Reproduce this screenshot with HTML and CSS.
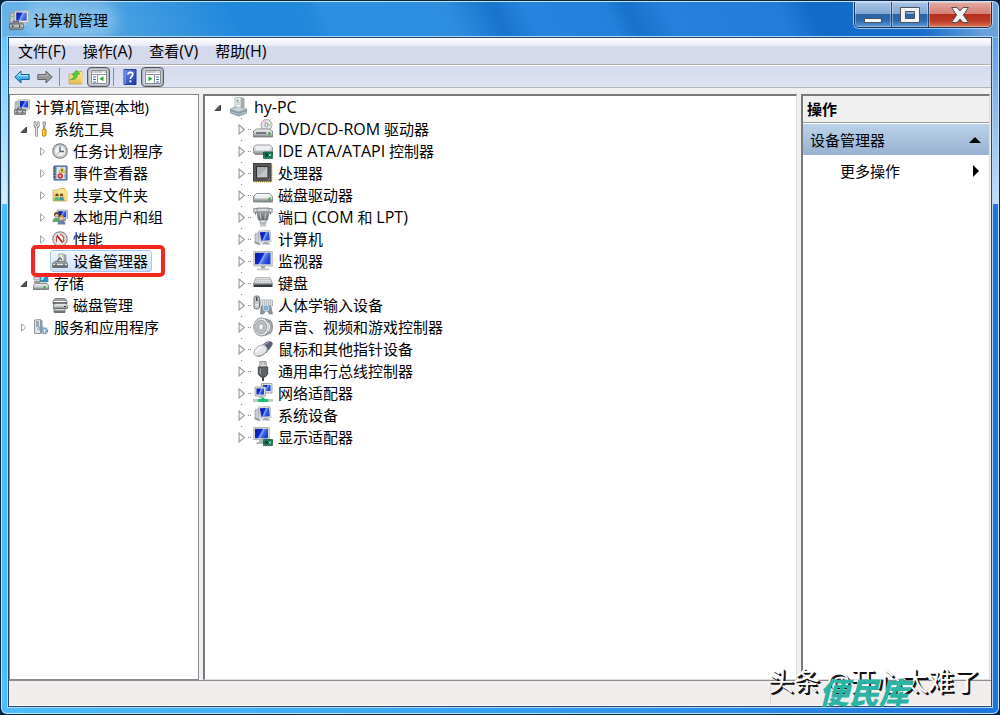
FILE: index.html
```html
<!doctype html>
<html lang="zh-CN">
<head>
<meta charset="UTF-8">
<title>计算机管理</title>
<link rel="stylesheet" href="styles.css">
</head>
<body>
<svg class="sprite" aria-hidden="true">
	<defs>
		<linearGradient id="gBlue" x1="0" y1="0" x2="1" y2=".4"><stop offset="0" stop-color="#0a1a9c"/><stop offset=".5" stop-color="#1228d4"/><stop offset=".58" stop-color="#86aaf6"/><stop offset=".75" stop-color="#3c66e4"/><stop offset="1" stop-color="#1c3fd0"/></linearGradient>
		<linearGradient id="gMetal" x1="0" y1="0" x2="0" y2="1"><stop offset="0" stop-color="#f4f5f5"/><stop offset=".6" stop-color="#c3c6c8"/><stop offset="1" stop-color="#777b7e"/></linearGradient>
		<linearGradient id="gDark" x1="0" y1="0" x2="0" y2="1"><stop offset="0" stop-color="#b5babd"/><stop offset="1" stop-color="#5b6165"/></linearGradient>
		<linearGradient id="gFolder" x1="0" y1="0" x2="0" y2="1"><stop offset="0" stop-color="#fdf0a8"/><stop offset="1" stop-color="#e5b94f"/></linearGradient>
		<linearGradient id="gArrow" x1="0" y1="0" x2="0" y2="1"><stop offset="0" stop-color="#8fdcff"/><stop offset="1" stop-color="#0d8be0"/></linearGradient>
		<linearGradient id="gHelp" x1="0" y1="0" x2="1" y2="1"><stop offset="0" stop-color="#6c8fe8"/><stop offset="1" stop-color="#1c34a8"/></linearGradient>
	</defs>
	<symbol id="open" viewBox="0 0 9 9"><path d="M7.500 2v5.500H2z" fill="#555" stroke="#2b2b2b" stroke-width=".8"/></symbol>
	<symbol id="closed" viewBox="0 0 9 9"><path d="M2.500.8v7.400L6.800 4.500z" fill="#fff" stroke="#999" stroke-width=".9"/></symbol>
	<symbol id="console" viewBox="0 0 16 16">
		<path d="M1 3l3-1v9H1z" fill="#c9cdd0" stroke="#888" stroke-width=".6"/>
		<path d="M4.500.800h11v9.200h-11z" fill="#e4e4dc" stroke="#a3a69f" stroke-width=".7"/><path d="M5.800 2h8.400v6.500H5.800z" fill="url(#gBlue)"/>
		<path d="M8 10h5l1 2H8z" fill="#bbb"/>
		<path d="M3.500 10.500v-1.500h4v1.500" fill="none" stroke="#666"/>
		<rect x=".5" y="10.500" width="11" height="5" rx=".7" fill="#8a9095" stroke="#5b6267" stroke-width=".7"/>
		<path d="M1 12.700h10" stroke="#ddd"/><path d="M3 12v2M8.500 12v2" stroke="#444"/><path d="M2 5h1" stroke="#2c2"/>
	</symbol>
	<symbol id="tools" viewBox="0 0 16 16">
		<path d="M2 1.500v3l1.600 1.300L5.200 4.500v-3M2.300 5.500h2.600M3.600 6v8.500" fill="none" stroke="#777" stroke-width="2.600" stroke-linecap="round"/>
		<path d="M2 1.500v3l1.600 1.300L5.200 4.500v-3M3.600 6v8.500" fill="none" stroke="#e2e4e6" stroke-width="1.300" stroke-linecap="round"/>
		<path d="M10 1h2.500v2l-.6 1.500v4h-1.400v-4L10 3z" fill="#ddd" stroke="#666" stroke-width=".7"/>
		<rect x="9.300" y="8" width="3.800" height="7.300" rx="1.500" fill="#f3b51b" stroke="#a56d00" stroke-width=".7"/><path d="M10.700 9v5" stroke="#ffe58a"/>
	</symbol>
	<symbol id="clock" viewBox="0 0 16 16">
		<circle cx="8" cy="8" r="7.200" fill="#e2e2de" stroke="#7f8082" stroke-width="1.200"/><circle cx="8" cy="8" r="5.600" fill="#edf2f9" stroke="#b2aaa0" stroke-width=".7"/>
		<path d="M8 3.500V8.500h4" fill="none" stroke="#58616c" stroke-width="1.300"/><path d="M5 11l2.500-2" stroke="#d39a35"/>
	</symbol>
	<symbol id="events" viewBox="0 0 16 16">
		<path d="M2 1h13v14H2z" fill="#7391c0" stroke="#44608f"/><path d="M4.500 2h9v12h-9z" fill="#dce6f3"/>
		<path d="M1 3h3M1 6h3M1 9h3M1 12h3" stroke="#555"/><path d="M10 2.200l3.200 5.300H6.800z" fill="#ffd22b" stroke="#b88a20" stroke-width=".5"/><path d="M10 4v2.500" stroke="#222"/>
		<circle cx="8.300" cy="11" r="2.700" fill="#d63030"/><path d="M7.300 10l2 2m0-2l-2 2" stroke="#fff" stroke-width=".8"/><path d="M12 10h2M12 12h2" stroke="#788faa"/>
	</symbol>
	<symbol id="share" viewBox="0 0 16 16">
		<path d="M1 3h5l1.500-1.500H13V4h2v10H1z" fill="url(#gFolder)" stroke="#c9a04a" stroke-width=".7"/><path d="M12.500 2v11l2.500 1V3z" fill="#f9e28b"/>
		<circle cx="5" cy="8" r="1.600" fill="#5a3b1c"/><circle cx="9.500" cy="8" r="1.600" fill="#6a4a25"/><path d="M2.300 13.500c0-5 5-5 5.200 0z" fill="#4fbf78"/><path d="M7 13.500c0-5 5-5 5.200 0z" fill="#4a8fb5"/><path d="M4 9.500h2M8.500 9.500h2" stroke="#f0c79b"/>
	</symbol>
	<symbol id="users" viewBox="0 0 16 16">
		<path d="M5 1h10.500v8.500H5z" fill="#ddd" stroke="#999" stroke-width=".7"/><path d="M6.200 2.200h8v6h-8z" fill="url(#gBlue)"/><path d="M10 10h4v2h-4z" fill="#999"/>
		<circle cx="4.500" cy="5.500" r="2.500" fill="#6a4a2c"/><circle cx="4.800" cy="6.500" r="1.600" fill="#f0c090"/><path d="M.5 13c0-6 8-6 8 0z" fill="#61a66a"/>
		<circle cx="9.500" cy="8.500" r="2.500" fill="#c38b31"/><circle cx="9.500" cy="9.300" r="1.600" fill="#f4cba4"/><path d="M5.500 15.500c0-6 8-6 8 0z" fill="#6980ae"/>
	</symbol>
	<symbol id="perf" viewBox="0 0 16 16">
		<circle cx="8" cy="8" r="7.200" fill="#f5f5f5" stroke="#8a8a8a" stroke-width="1.200"/><circle cx="8" cy="8" r="5.300" fill="#fff" stroke="#a8a8a8" stroke-width=".6"/>
		<path d="M4.500 11V6.500L6 4.500M8 3.500l2 .7 1.700 2.300V11" fill="none" stroke="#c44" stroke-width="1.200"/><path d="M5 4.500l5.500 7" stroke="#c5161e" stroke-width="1.800"/>
	</symbol>
	<symbol id="devmgr" viewBox="0 0 16 16">
		<path d="M7 1h5v8H7z" fill="#eef1f1" stroke="#8b9598" stroke-width=".8"/><path d="M12 1l2.500 1v7H12z" fill="#9ca4a7"/><path d="M5 8l3-3 2 2" fill="none" stroke="#526068" stroke-width="1.300"/><path d="M10 3h1" stroke="#2a3"/>
		<path d="M2.500 8.500h11l2 2v4h-15v-4z" fill="url(#gDark)" stroke="#5e666c" stroke-width=".8"/><path d="M1 11.500h14" stroke="#e0e5e7"/><path d="M4 10.500v2M12 10.500v2" stroke="#333"/>
	</symbol>
	<symbol id="storage" viewBox="0 0 16 16">
		<path d="M1 2h7v3H1z" fill="#dce1e3" stroke="#777" stroke-width=".7"/><path d="M7 1h8v6H7z" fill="#238fc3" stroke="#78868d" stroke-width=".7"/><path d="M8 2h4l-2 3H8z" fill="#93e0f3"/>
		<path d="M1 6h6v2H1z" fill="#999"/><path d="M2 8.500h12l1.500 2v4H.5v-4z" fill="url(#gMetal)" stroke="#666" stroke-width=".7"/><path d="M11.500 11v2.500" stroke="#21a326" stroke-width="1.500"/>
	</symbol>
	<symbol id="diskmgr" viewBox="0 0 16 16">
		<path d="M3 1.500h10l2 2.500v3H1V4z" fill="url(#gDark)" stroke="#555" stroke-width=".7"/><path d="M1.500 4.500h13" stroke="#fff"/>
		<path d="M3 6.500h11l1.500 2v3h-14v-3z" fill="url(#gMetal)" stroke="#666" stroke-width=".7"/><path d="M2 11.500h11v4H2z" fill="url(#gDark)" stroke="#555" stroke-width=".7"/><path d="M2.500 12.700h10" stroke="#e7e7e7"/><path d="M12 9.500h2" stroke="#333"/>
	</symbol>
	<symbol id="services" viewBox="0 0 16 16">
		<path d="M1.500 1l6-.5v14h-6z" fill="#e0e5e8" stroke="#778087" stroke-width=".8"/><path d="M7.500.5l2 1v13h-2z" fill="#8f989d"/><path d="M3 3h3M3 5h3M3 7h3" stroke="#667"/><path d="M4 10h1" stroke="#2b2"/>
		<circle cx="8" cy="9" r="2" fill="none" stroke="#79a0c5" stroke-width="1.500" stroke-dasharray="1.300 .6"/><circle cx="11.500" cy="11.800" r="2.700" fill="#e7f1fa" stroke="#6690b8" stroke-width="1.900" stroke-dasharray="1.500 .7"/><circle cx="11.500" cy="11.800" r="1.500" fill="#fff" stroke="#7da4c9"/>
	</symbol>
	<symbol id="pc" viewBox="0 0 20 20">
		<path d="M6 1l6-1v13l-6-1z" fill="#edf0ee" stroke="#9ca4a3" stroke-width=".7"/><path d="M12 0l3.500 1.500v11L12 13z" fill="#a2aaaa"/><path d="M7.300 5h3.500M7.300 7h3.500" stroke="#b5beba"/><circle cx="8.500" cy="3.500" r=".9" fill="#34b545"/>
		<path d="M1.500 12l5-2 11 2v4l-8 3-8-3z" fill="#8ea0aa" stroke="#73808a" stroke-width=".7"/><path d="M1.500 12l8 2.500 8-2.500-8-2z" fill="#c8d3d8"/><path d="M1.500 15l8 2.500 8-2.500" fill="none" stroke="#b9c6cc"/>
	</symbol>
	<symbol id="drive" viewBox="0 0 20 20">
		<path d="M3.500 8.500h13l3 3v5.500H.5v-5.500z" fill="url(#gMetal)" stroke="#777b7d" stroke-width=".8"/><path d="M3.500 9h13l2 2.500h-17z" fill="#f6f7f7"/><path d="M2 12.500h14" stroke="#fafafa"/><rect x="15.500" y="12.500" width="1.800" height="3.300" fill="#26b331"/>
	</symbol>
	<symbol id="dvd" viewBox="0 0 20 20">
		<circle cx="13.500" cy="6" r="5.500" fill="#e2e5e9" stroke="#8c9299" stroke-width=".8"/><path d="M13.500 6L9.500 2.200A5.500 5.500 0 0 1 13 .700z" fill="#f0bddd"/><path d="M13.500 6l5-2a5.500 5.500 0 0 1 .3 3z" fill="#abe0ab"/><circle cx="13.500" cy="6" r="1.600" fill="#fff" stroke="#888"/>
		<path d="M3.500 10h13l3 2v6H.5v-6z" fill="url(#gMetal)" stroke="#71777a" stroke-width=".8"/><path d="M3 14h10" stroke="#41484c" stroke-width="1.300"/><rect x="15.500" y="13" width="1.800" height="3" fill="#26b331"/>
	</symbol>
	<symbol id="ide" viewBox="0 0 20 20">
		<path d="M3 4h14l2.500 2.500v6L17 13.500H2.500L.5 12V6.500z" fill="url(#gMetal)" stroke="#81868a" stroke-width=".8"/><path d="M3 5.500h14v4H3z" fill="#eceeef"/>
		<path d="M10.500 11h9v6.500h-9z" fill="#1c7a5c" stroke="#0d4b36" stroke-width=".7"/><path d="M12 12.500h3v3h-3z" fill="#253238"/><path d="M16 13h2v2h-2z" fill="#6be09a"/><path d="M12 18h6" stroke="#d7aa34" stroke-dasharray="1 1"/>
	</symbol>
	<symbol id="cpu" viewBox="0 0 20 20">
		<path d="M1 18.800h18M18.800 2v17" stroke="#d5a536" stroke-width="1.300" stroke-dasharray="1 1"/><rect x=".5" y=".5" width="17.500" height="17.500" fill="#56585a" stroke="#3d3f41"/><rect x="3.500" y="3.500" width="11.500" height="11.500" fill="#c3c5c6" stroke="#2c2e2f"/><path d="M4 14.500V4h10.500z" fill="#aaadaf"/><path d="M15 16.500h1.500V15z" fill="#e8b52f"/>
	</symbol>
	<symbol id="port" viewBox="0 0 20 20">
		<path d="M.8 1.500h18.400v4H.8z" fill="#d6dadb" stroke="#7c8386" stroke-width=".8"/><path d="M4 1h12v5l-1.500 7h-9L4 6z" fill="url(#gDark)" stroke="#7c8286" stroke-width=".8"/><path d="M4.500 3h11" stroke="#f1f3f4" stroke-width="1.300"/><path d="M7 6l1 6M12.500 6l-.5 6" stroke="#cbd0d3"/><path d="M2.500 5.500v2M17.500 5.500v2" stroke="#666"/><path d="M7 13h6v3H7z" fill="#dde0e2" stroke="#777" stroke-width=".6"/><path d="M8 16v3.500M10 16v3.500M12 16v3.500" stroke="#858a8f"/>
	</symbol>
	<symbol id="computer" viewBox="0 0 20 20">
		<path d="M2 5l4-1.500v11L2 13z" fill="#c8cccf" stroke="#999" stroke-width=".7"/><path d="M5.500 2L17 1.500l1 11-10 1z" fill="#e3e4df" stroke="#b4b7b3" stroke-width=".8"/><path d="M6.800 3.200l9.200-.5.800 8.500-8.300.9z" fill="url(#gBlue)"/><path d="M11 13h4l2.500 2.500H9z" fill="#a7abad"/><path d="M2 13l6 2-1.500 1L1 14z" fill="#858b8e"/>
	</symbol>
	<symbol id="monitor" viewBox="0 0 20 20">
		<path d="M.7.500h18.600v14.500H.7z" fill="#dcddd8" stroke="#a9ada9" stroke-width=".8"/><path d="M2 1.800h15.500v11.500H2z" fill="url(#gBlue)"/><path d="M8 15h4v2.500H8z" fill="#a0a2a0"/><path d="M4.500 17.500h11l1 1.700h-13z" fill="#c3c5c3"/>
	</symbol>
	<symbol id="keyboard" viewBox="0 0 20 20">
		<path d="M3 5h14l2.500 5v4H.5v-4z" fill="#35383c"/><path d="M3 4.500h14l2.200 6H.8z" fill="#dfe2e5" stroke="#9ba0a5" stroke-width=".7"/><path d="M3.500 6.500h13M3 8.500h14" stroke="#a4aab0" stroke-dasharray="1 1"/><path d="M.5 11.200h19" stroke="#8b9095"/>
	</symbol>
	<symbol id="hid" viewBox="0 0 20 20">
		<path d="M6 5h13.500v6H6z" fill="#e2e4e6" stroke="#999" stroke-width=".7"/><path d="M7 7h12M7 9h12" stroke="#8d9297" stroke-dasharray="1 1"/><rect x="1" y="1" width="5.500" height="13" rx="2" fill="#c5c9cc" stroke="#6f767c"/><path d="M3 2h1.500v4H3z" fill="#42484d"/><path d="M2 10h3.500" stroke="#fff"/>
		<path d="M8 12c2-2 9-2 10 0l1.500 7h-3l-2-3h-2l-2 3h-3z" fill="#8a949e" stroke="#76818b" stroke-width=".7"/><circle cx="13" cy="13" r="3" fill="#7eafd4" stroke="#c8d8e7"/>
	</symbol>
	<symbol id="sound" viewBox="0 0 20 20">
		<path d="M12 1.500l6 2.500c2 4 2 8 0 12l-6 2.500z" fill="#a1a7ab" stroke="#777" stroke-width=".7"/><ellipse cx="8.500" cy="10" rx="7.800" ry="9" fill="#e4e6e8" stroke="#8f9599"/><ellipse cx="8" cy="10" rx="5.800" ry="6.800" fill="#b9bec1" stroke="#8e959a" stroke-width=".7"/><ellipse cx="8" cy="10" rx="2.500" ry="3.300" fill="#eef0f2" stroke="#a2a8ae"/><path d="M15 6c2 2 2 6 0 8" fill="none" stroke="#f8f8f8"/>
	</symbol>
	<symbol id="mouse" viewBox="0 0 20 20">
		<path d="M8.500 7L12 4c3-2 7-2 7.500.5C19 8 15 11 13 14z" fill="#555f6e" stroke="#6b7482" stroke-width=".7"/><path d="M11 5.500L16 3.200" stroke="#aab2bd"/><path d="M.8 14c0-4 6-9 9.700-8 3.500 1 4.500 4.500 3 6.500-2 3-5 5-8 5-2.700 0-4.700-1.500-4.700-3.500z" fill="#e2e4e6" stroke="#9aa0a6" stroke-width=".8"/><path d="M3 13c2-3.500 4-4.500 6-5" fill="none" stroke="#fff" stroke-width="1.800"/><path d="M4 17c4 .5 8-2 10-5.500" fill="none" stroke="#8d949b"/>
	</symbol>
	<symbol id="usb" viewBox="0 0 20 20">
		<path d="M6.800.5h6.400v6H6.800z" fill="#d4d8da" stroke="#999"/><path d="M8.300 2.500h1M11 2.500h1" stroke="#888" stroke-width="1.300"/><path d="M5.300 6h9.400v7l-2.500 3H7.800l-2.500-3z" fill="#5d6166" stroke="#44474b"/><path d="M7.300 7.500V13" stroke="#a3a8ad"/><path d="M10 16v4" stroke="#444" stroke-width="2"/>
	</symbol>
	<symbol id="network" viewBox="0 0 20 20">
		<path d="M8.500.500h10.500v9.500H8.500z" fill="#dddfe0" stroke="#aaa"/><path d="M10 2h7.500v6H10z" fill="url(#gBlue)"/><path d="M2 4h10.500v9H2z" fill="#dddfe0" stroke="#aaa"/><path d="M3.500 5.500h7.500v6H3.500z" fill="url(#gBlue)"/><path d="M6 13h4v2H6z" fill="#bbb"/><path d="M0 17.500h20" stroke="#b9cfc2" stroke-width="3"/><path d="M5 17.500h10M10 17.500v-3" stroke="#18c070" stroke-width="3"/>
	</symbol>
	<symbol id="display" viewBox="0 0 20 20">
		<path d="M.7.500h15.600v12H.7z" fill="#dcddd8" stroke="#a9ada9" stroke-width=".8"/><path d="M2 1.800h13v9.500H2z" fill="url(#gBlue)"/><path d="M6 13h4v2H6zM3.500 15h9v2h-9z" fill="#b6b8b8"/><path d="M10.500 12.500h9v6h-9z" fill="#1c7a5c" stroke="#0d4b36" stroke-width=".7"/><path d="M12 14h3v3h-3z" fill="#29353b"/><path d="M16 14.500h2v2h-2z" fill="#6be09a"/><path d="M12 19h6" stroke="#d7aa34" stroke-dasharray="1 1"/>
	</symbol>
	<symbol id="back" viewBox="0 0 16 16"><path d="M.8 8L7 2v3.500h8.200v5H7V14z" fill="url(#gArrow)" stroke="#1b6093"/><path d="M3 7.500l3-3V6.600h8" fill="none" stroke="#c9efff" stroke-width=".8"/></symbol>
	<symbol id="forward" viewBox="0 0 16 16"><path d="M15.200 8L9 2v3.500H.8v5H9V14z" fill="#979797" stroke="#656565"/><path d="M1.800 6.600H10V4.500" fill="none" stroke="#c5c5c5" stroke-width=".8"/></symbol>
	<symbol id="up" viewBox="0 0 16 16"><path d="M1 5h6l1.500-2.500H14V15H1z" fill="url(#gFolder)" stroke="#c9a653" stroke-width=".8"/><path d="M13 3l1.700 1v9L13 15z" fill="#f9dc7b"/><path d="M2.500 10.500c2.500-.5 3.300-2 3.500-5L4 6l4.500-4.800L12 5l-2.500.3C9.500 9 6.500 11.500 2.500 10.500z" fill="#54ce38" stroke="#3a9a2a" stroke-width=".6"/></symbol>
	<symbol id="showtree" viewBox="0 0 16 16"><path d="M.5 1.500h15v13H.5z" fill="#fff" stroke="#8a8f94"/><path d="M1 3h14M1 5.500h14" stroke="#8f9499"/><path d="M11 3h3" stroke="#fff"/><path d="M6.500 6v8" stroke="#8f9499"/><path d="M2 8h3M2 10.500h3M2 13h3" stroke="#3d6fb5"/><path d="M12.500 7.300v5L8.500 9.800z" fill="#2aa51f"/></symbol>
	<symbol id="help" viewBox="0 0 16 16"><path d="M2 .5h12v15H2z" fill="url(#gHelp)" stroke="#233b95"/><path d="M3 1v14" stroke="#8fa9f0"/><path d="M6 5.500C6 2.500 10.800 2.700 10.800 5.300 10.800 7.300 8.400 7.500 8.400 10" fill="none" stroke="#fff" stroke-width="1.700"/><circle cx="8.400" cy="12.300" r="1.100" fill="#fff"/></symbol>
	<symbol id="showpane" viewBox="0 0 16 16"><path d="M.5 1.500h15v13H.5z" fill="#fff" stroke="#8a8f94"/><path d="M1 3h14M1 5.500h14" stroke="#8f9499"/><path d="M11 3h3" stroke="#fff"/><path d="M9.500 6v8" stroke="#8f9499"/><path d="M11 8h3M11 10.500h3M11 13h3" stroke="#3d6fb5"/><path d="M3.500 7.300v5l4-2.500z" fill="#2aa51f"/></symbol>
</svg>

<div class="window">
	<header class="titlebar">
		<svg class="title-icon"><use href="#console"/></svg>
		<h1 class="title">计算机管理</h1>
		<div class="controls">
			<button class="control minimize" aria-label="最小化"><svg viewBox="0 0 20 18"><path d="M1.500 12.500h17v4h-17z" fill="#fff" stroke="#50505c"/></svg></button>
			<button class="control maximize" aria-label="最大化"><svg viewBox="0 0 20 18"><path d="M.5 1.500h19v15H.5zM5.500 5.500v7h9v-7z" fill="#f4f4f4" fill-rule="evenodd" stroke="#50505c"/></svg></button>
			<button class="control close" aria-label="关闭"><svg viewBox="0 0 20 18"><path d="M1.500 1.500h5.500L10 5l3-3.500h5.500L13.300 9l5.200 7.500H13L10 13l-3 3.500H1.500L6.700 9z" fill="#f4f4f4" stroke="#50505c"/></svg></button>
		</div>
	</header>

	<div class="client">
		<nav class="menubar">
			<button>文件<span class="latin">(F)</span></button>
			<button>操作<span class="latin">(A)</span></button>
			<button>查看<span class="latin">(V)</span></button>
			<button>帮助<span class="latin">(H)</span></button>
		</nav>
		<div class="toolbar">
			<button class="tool" aria-label="后退"><svg><use href="#back"/></svg></button>
			<button class="tool" aria-label="前进"><svg><use href="#forward"/></svg></button>
			<span class="separator"></span>
			<button class="tool" aria-label="上一级"><svg><use href="#up"/></svg></button>
			<button class="tool pressed" aria-label="显示控制台树"><svg><use href="#showtree"/></svg></button>
			<span class="separator"></span>
			<button class="tool" aria-label="帮助"><svg><use href="#help"/></svg></button>
			<button class="tool pressed" aria-label="显示操作窗格"><svg><use href="#showpane"/></svg></button>
		</div>

		<main class="panes">
			<section class="pane nav-pane">
				<ul class="tree">
					<li>
						<div class="row"><span class="node"><svg><use href="#console"/></svg>计算机管理(本地)</span></div>
						<ul>
							<li>
								<div class="row"><button class="toggle" aria-label="折叠"><svg><use href="#open"/></svg></button><span class="node"><svg><use href="#tools"/></svg>系统工具</span></div>
								<ul class="indent">
									<li class="row"><button class="toggle" aria-label="展开"><svg><use href="#closed"/></svg></button><span class="node"><svg><use href="#clock"/></svg>任务计划程序</span></li>
									<li class="row"><button class="toggle" aria-label="展开"><svg><use href="#closed"/></svg></button><span class="node"><svg><use href="#events"/></svg>事件查看器</span></li>
									<li class="row"><button class="toggle" aria-label="展开"><svg><use href="#closed"/></svg></button><span class="node"><svg><use href="#share"/></svg>共享文件夹</span></li>
									<li class="row"><button class="toggle" aria-label="展开"><svg><use href="#closed"/></svg></button><span class="node"><svg><use href="#users"/></svg>本地用户和组</span></li>
									<li class="row"><button class="toggle" aria-label="展开"><svg><use href="#closed"/></svg></button><span class="node"><svg><use href="#perf"/></svg>性能</span></li>
									<li class="row"><span class="toggle"></span><span class="node selected"><svg><use href="#devmgr"/></svg>设备管理器<span class="marker"></span></span></li>
								</ul>
							</li>
							<li>
								<div class="row"><button class="toggle" aria-label="折叠"><svg><use href="#open"/></svg></button><span class="node"><svg><use href="#storage"/></svg>存储</span></div>
								<ul class="indent">
									<li class="row"><span class="toggle"></span><span class="node"><svg><use href="#diskmgr"/></svg>磁盘管理</span></li>
								</ul>
							</li>
							<li class="row"><button class="toggle" aria-label="展开"><svg><use href="#closed"/></svg></button><span class="node"><svg><use href="#services"/></svg>服务和应用程序</span></li>
						</ul>
					</li>
				</ul>
			</section>

			<section class="pane device-pane">
				<ul class="tree devices">
					<li>
						<div class="row"><button class="toggle" aria-label="折叠"><svg><use href="#open"/></svg></button><span class="node"><svg><use href="#pc"/></svg><span class="latin">hy-PC</span></span></div>
						<ul class="indent">
							<li class="row"><button class="toggle" aria-label="展开"><svg><use href="#closed"/></svg></button><span class="node"><svg><use href="#dvd"/></svg><span><span class="latin">DVD/CD-ROM</span> 驱动器</span></span></li>
							<li class="row"><button class="toggle" aria-label="展开"><svg><use href="#closed"/></svg></button><span class="node"><svg><use href="#ide"/></svg><span><span class="latin">IDE ATA/ATAPI</span> 控制器</span></span></li>
							<li class="row"><button class="toggle" aria-label="展开"><svg><use href="#closed"/></svg></button><span class="node"><svg><use href="#cpu"/></svg>处理器</span></li>
							<li class="row"><button class="toggle" aria-label="展开"><svg><use href="#closed"/></svg></button><span class="node"><svg><use href="#drive"/></svg>磁盘驱动器</span></li>
							<li class="row"><button class="toggle" aria-label="展开"><svg><use href="#closed"/></svg></button><span class="node"><svg><use href="#port"/></svg><span>端口 <span class="latin">(COM</span> 和 <span class="latin">LPT)</span></span></span></li>
							<li class="row"><button class="toggle" aria-label="展开"><svg><use href="#closed"/></svg></button><span class="node"><svg><use href="#computer"/></svg>计算机</span></li>
							<li class="row"><button class="toggle" aria-label="展开"><svg><use href="#closed"/></svg></button><span class="node"><svg><use href="#monitor"/></svg>监视器</span></li>
							<li class="row"><button class="toggle" aria-label="展开"><svg><use href="#closed"/></svg></button><span class="node"><svg><use href="#keyboard"/></svg>键盘</span></li>
							<li class="row"><button class="toggle" aria-label="展开"><svg><use href="#closed"/></svg></button><span class="node"><svg><use href="#hid"/></svg>人体学输入设备</span></li>
							<li class="row"><button class="toggle" aria-label="展开"><svg><use href="#closed"/></svg></button><span class="node"><svg><use href="#sound"/></svg>声音、视频和游戏控制器</span></li>
							<li class="row"><button class="toggle" aria-label="展开"><svg><use href="#closed"/></svg></button><span class="node"><svg><use href="#mouse"/></svg>鼠标和其他指针设备</span></li>
							<li class="row"><button class="toggle" aria-label="展开"><svg><use href="#closed"/></svg></button><span class="node"><svg><use href="#usb"/></svg>通用串行总线控制器</span></li>
							<li class="row"><button class="toggle" aria-label="展开"><svg><use href="#closed"/></svg></button><span class="node"><svg><use href="#network"/></svg>网络适配器</span></li>
							<li class="row"><button class="toggle" aria-label="展开"><svg><use href="#closed"/></svg></button><span class="node"><svg><use href="#computer"/></svg>系统设备</span></li>
							<li class="row"><button class="toggle" aria-label="展开"><svg><use href="#closed"/></svg></button><span class="node"><svg><use href="#display"/></svg>显示适配器</span></li>
						</ul>
					</li>
				</ul>
			</section>

			<aside class="pane action-pane">
				<h2 class="action-title">操作</h2>
				<button class="action-group">设备管理器<svg viewBox="0 0 12 12"><path d="M0 9h12L6 3z"/></svg></button>
				<button class="action-item">更多操作<svg viewBox="0 0 12 12"><path d="M4 0v12l6-6z"/></svg></button>
			</aside>
		</main>

		<footer class="statusbar"><span class="status-main"></span><span class="status-side"></span></footer>
	</div>

	<div class="credit">头条 @开心太难了</div>
	<div class="stamp">便民库</div>
</div>
</body>
</html>
```

FILE: styles.css
```css
* {
	box-sizing: border-box;
}

body {
	margin: 0;
	background-color: #06233f;
	font-family: "Open Sans", "Noto Sans CJK SC", sans-serif;
	font-size: 15px;
	line-height: 22px;
	color: #000;
}

button {
	margin: 0;
	padding: 0;
	border: 0;
	background: none;
	font: inherit;
	color: inherit;
}

ul {
	margin: 0;
	padding: 0;
	list-style: none;
}

.sprite {
	position: absolute;
	width: 0;
	height: 0;
}

.latin {
	font-size: 16px;
}

/* window frame */
.window {
	position: relative;
	display: flex;
	flex-direction: column;
	height: 100vh;
	padding: 1px 7px 7px;
	border: 1px solid #0b2747;
	border-radius: 7px;
	box-shadow: inset 0 0 0 1px #c4e3f8;
	background:
		linear-gradient(rgba(255,255,255,.15), rgba(255,255,255,.75)) 0 36px / 8px 167px no-repeat,
		linear-gradient(rgba(255,255,255,.3), rgba(255,255,255,.75)) 100% 36px / 8px 167px no-repeat,
		linear-gradient(65deg, #6bb4e8 0, #58a9e4 8%, #2088dc 24%, #2188dc 31%, #2b8fe2 33%, #2d8ee0 45%, #1874cd 50%, #2784de 53%, #2380db 61%, #1672ca 63%, #2581dc 67%, #227cda 78%, #136bc8 81%, #156dcc 91%, #6aa0dc 97%) 0 0 / 100% 37px no-repeat,
		linear-gradient(90deg, #4cbcfc, #38a8f6 40%, #1c74dc);
}

.titlebar {
	display: flex;
	align-items: center;
	height: 35px;
	flex: none;
}

.title-icon {
	width: 20px;
	height: 20px;
	margin-left: 1px;
}

.title {
	margin: 0 0 0 2px;
	padding: 0 2px;
	border-radius: 11px;
	background-color: rgba(255,255,255,.25);
	box-shadow: 0 0 12px 8px rgba(255,255,255,.25);
	font-size: 15px;
	font-weight: normal;
}

.controls {
	display: flex;
	align-self: flex-start;
	height: 26px;
	margin-left: auto;
	border: 1px solid #1a2f55;
	border-top: 0;
	border-radius: 0 0 5px 5px;
	box-shadow: 0 0 0 1px rgba(200,225,250,.8);
	overflow: hidden;
}

.control {
	display: flex;
	align-items: center;
	justify-content: center;
	width: 37px;
	border-right: 1px solid #29456f;
	box-shadow: inset 0 0 0 1px rgba(255,255,255,.35);
	background: linear-gradient(#a9c5e6, #7fa6d3 48%, #2b63a3 50%, #2e6cb1 75%, #5b9cd8);
}

.control svg {
	width: 20px;
	height: 18px;
}

.close {
	width: 62px;
	border-right: 0;
	background: linear-gradient(#e5aba3, #d27e73 48%, #b52e1c 50%, #bd3b27 75%, #d87555);
}

.client {
	display: flex;
	flex-direction: column;
	flex: 1;
	min-height: 0;
	border: 1px solid #23476f;
	box-shadow: 0 0 0 1px #b4d6f2;
	background-color: #f0f0f0;
}

.menubar {
	display: flex;
	height: 27px;
	flex: none;
	padding: 0 0 0 1px;
	border-bottom: 1px solid #b0aeae;
	background: linear-gradient(#fff, #e7ebf5 8px, #d4d9ec 8px);
}

.menubar button {
	padding: 0 9px 0 8px;
}

.toolbar {
	display: flex;
	align-items: center;
	height: 23px;
	flex: none;
	padding-left: 1px;
	border-top: 1px solid #fff;
	border-bottom: 1px solid #b4b4b8;
	background: linear-gradient(#d4d9ec, #dfe4f4);
}

.tool {
	display: flex;
	align-items: center;
	justify-content: center;
	width: 23px;
	height: 20px;
}

.tool svg {
	width: 16px;
	height: 16px;
}

.pressed {
	border: 1px solid #55585f;
	border-radius: 4px;
	box-shadow: inset 0 0 2px 1px #a3a7b0;
	background-color: #d6dae4;
}

.separator {
	width: 1px;
	height: 18px;
	margin: 0 4px 0 3px;
	background-color: #8b8e98;
}

/* three panes */
.panes {
	display: grid;
	grid-template-columns: 190px 1fr 189px;
	gap: 4px;
	flex: 1;
	min-height: 0;
	padding: 6px 1px 0 0;
}

.pane {
	border: 1px solid #828790;
	background-color: #fff;
	overflow: hidden;
}

.nav-pane {
	padding: 1px 2px 0;
}

.device-pane,
.action-pane {
	border-width: 2px 1px 1px 2px;
	border-color: #77797c #dcdcdc #dcdcdc #77797c;
}

.row {
	display: flex;
	height: 22px;
}

.indent {
	padding-left: 19px;
}

.toggle {
	display: flex;
	align-items: center;
	justify-content: center;
	width: 19px;
	padding-left: 3px;
	flex: none;
}

.toggle svg {
	width: 9px;
	height: 9px;
}

.node {
	position: relative;
	display: flex;
	align-items: center;
	gap: 5px;
	padding: 0 3px 0 1px;
	border: 1px solid transparent;
	line-height: 20px;
	white-space: nowrap;
}

.node svg {
	width: 16px;
	height: 16px;
	flex: none;
}

.selected {
	border-color: #a9c9ea;
	border-radius: 3px;
	background: linear-gradient(#f0f6fd, #cfe2f7);
}

.marker {
	position: absolute;
	top: -6px;
	right: -14px;
	bottom: -6px;
	left: -20px;
	border: 4px solid #f7261c;
	border-radius: 5px;
	z-index: 2;
}

.devices .toggle {
	width: 22px;
}

.devices .indent .toggle svg {
	width: 11px;
	height: 11px;
}

.devices .node svg {
	width: 20px;
	height: 20px;
}

.devices .indent {
	padding-left: 24px;
}

/* dotted connector lines */
.devices .indent .toggle {
	background:
		linear-gradient(#777, #777) 12px 0 / 1px 1px no-repeat,
		linear-gradient(#888, #888) 21px 11px / 1px 1px no-repeat,
		linear-gradient(#888, #888) 19px 11px / 1px 1px no-repeat;
}

.action-title {
	height: 27px;
	margin: 0 0 1px;
	padding: 2px 4px;
	border-bottom: 1px solid #9a9a9a;
	background-color: #f0f0f0;
	font-size: 15px;
	font-weight: bold;
}

.action-group,
.action-item {
	display: flex;
	align-items: center;
	justify-content: space-between;
	width: 100%;
	height: 31px;
	padding: 0 8px 0 7px;
}

.action-group {
	background: linear-gradient(#bbd3e9, #98b1d1);
}

.action-item {
	padding-left: 37px;
}

.action-group svg,
.action-item svg {
	width: 12px;
	height: 12px;
}

.statusbar {
	display: flex;
	height: 26px;
	flex: none;
	padding: 2px 0 1px;
	border-top: 1px solid #8b8e92;
	border-bottom: 1px solid #fff;
	background-color: #f0edec;
}

.status-main {
	flex: 1;
	border-right: 1px solid #d8d5d4;
}

.status-side {
	width: 220px;
}

/* text laid over the corner of the window */
.credit {
	position: absolute;
	right: 19px;
	bottom: 17px;
	font-size: 26px;
	line-height: 32px;
	color: #fff;
	text-shadow: 1px 1px 0 #111, 2px 2px 0 #111;
	white-space: nowrap;
}

.stamp {
	position: absolute;
	right: 90px;
	bottom: 5px;
	font-size: 30px;
	font-style: italic;
	font-weight: 900;
	line-height: 32px;
	color: #2bb3a3;
}
```
